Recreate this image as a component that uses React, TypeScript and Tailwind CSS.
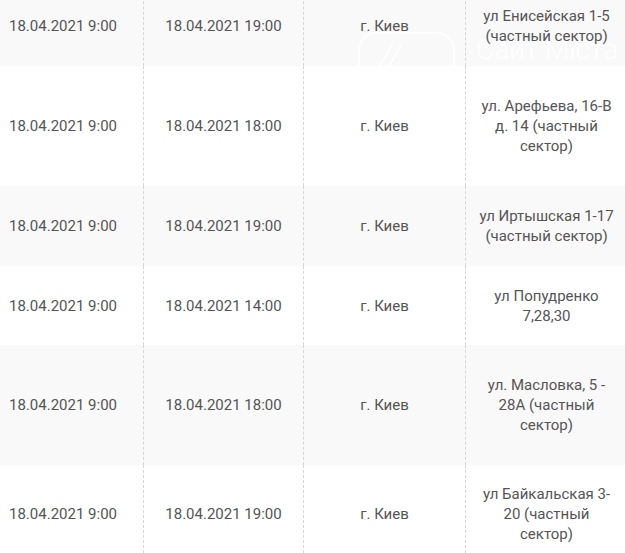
const rows = [
  { from: "18.04.2021 9:00", to: "18.04.2021 19:00", city: "г. Киев", addr: "ул Енисейская 1-5 (частный сектор)", h: "h-[80px]" },
  { from: "18.04.2021 9:00", to: "18.04.2021 18:00", city: "г. Киев", addr: "ул. Арефьева, 16-В д. 14 (частный сектор)", h: "h-[120px]" },
  { from: "18.04.2021 9:00", to: "18.04.2021 19:00", city: "г. Киев", addr: "ул Иртышская 1-17 (частный сектор)", h: "h-[80px]" },
  { from: "18.04.2021 9:00", to: "18.04.2021 14:00", city: "г. Киев", addr: "ул Попудренко 7,28,30", h: "h-[79px]" },
  { from: "18.04.2021 9:00", to: "18.04.2021 18:00", city: "г. Киев", addr: "ул. Масловка, 5 - 28А (частный сектор)", h: "h-[120px]" },
  { from: "18.04.2021 9:00", to: "18.04.2021 19:00", city: "г. Киев", addr: "ул Байкальская 3-20 (частный сектор)", h: "h-[98px]" },
];

const cell = "relative z-10 flex items-center justify-center text-center px-3 border-r border-dashed border-[#d6d6d6]";

export default function App() {
  return (
    <div className="relative w-[625px] h-[553px] overflow-hidden bg-white text-[15px] leading-[20px] text-[#555]" style={{ fontFamily: "Roboto, 'Liberation Sans', sans-serif" }}>
      <div className="ml-[-17px] mt-[-14px] w-[645px]">
        {rows.map((r, i) => (
          <div
            key={i}
            className={`grid grid-cols-[161px_160px_162px_162px] ${r.h} ${i % 2 === 0 ? "bg-[#f9f9f9]" : "bg-white"}`}
          >
            <div className={cell}>{r.from}</div>
            <div className={cell}>{r.to}</div>
            <div className={cell}>{r.city}</div>
            <div className={cell}>{r.addr}</div>
          </div>
        ))}
      </div>

      {/* watermark, sits behind the cell text */}
      <div className="absolute z-0 left-[358px] top-[32px] w-[97px] h-[70px] rounded-t-[18px] border-2 border-b-0 border-white/80 pointer-events-none" />
      <div className="absolute z-0 left-[378px] top-[40px] text-[34px] font-light italic text-white/80 leading-none pointer-events-none">//</div>
      <div className="absolute z-0 left-[476px] top-[36px] text-[28px] font-light text-white/80 leading-none pointer-events-none">Сайт Міста</div>
    </div>
  );
}
